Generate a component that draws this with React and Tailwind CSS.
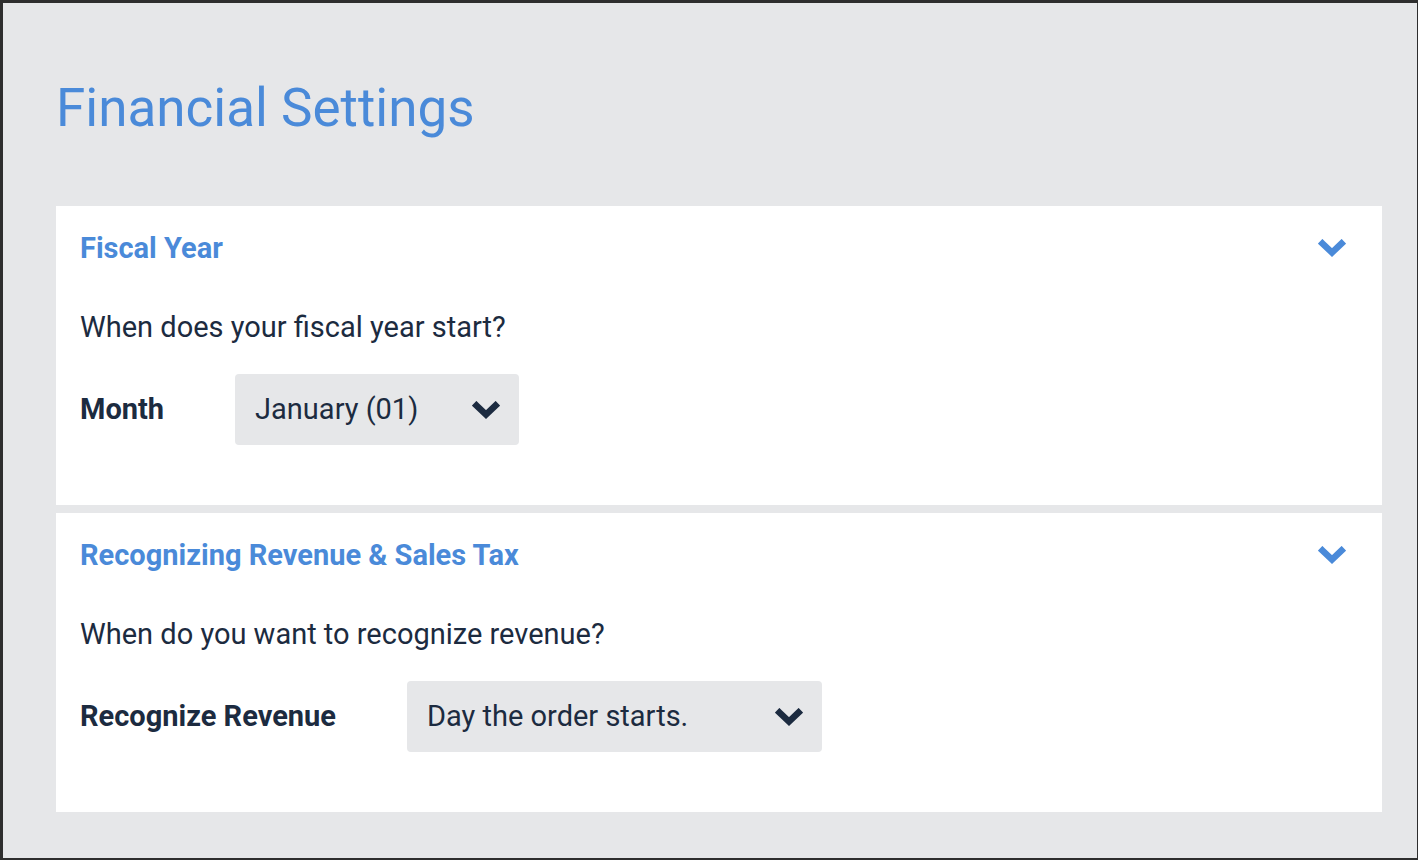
import React from 'react';

function Chevron({ className }) {
  return (
    <svg className={className} width="28" height="18" viewBox="0 0 28 18" fill="none">
      <polyline points="4.5,4.5 14,13.5 23.5,4.5" stroke="currentColor" strokeWidth="6.5" strokeLinecap="square" strokeLinejoin="miter" />
    </svg>
  );
}

function SelectBox({ value, width }) {
  return (
    <div className={`${width} h-[71px] bg-[#e6e7e9] rounded-[4px] flex items-center justify-between pl-[20px] pr-[19px]`}>
      <span className="text-[29px] text-[#1c2b40]">{value}</span>
      <Chevron className="text-[#1c2b40]" />
    </div>
  );
}

function Section({ title, question, label, value, selectWidth }) {
  return (
    <div className="bg-white pt-[24px] pb-[60px] pl-[24px] pr-[36px]">
      <div className="flex items-center justify-between h-[36px]">
        <h2 className="text-[29px] font-bold text-[#4a8ad9] leading-[36px]">{title}</h2>
        <Chevron className="text-[#4a8ad9]" />
      </div>
      <p className="mt-[43px] text-[29px] leading-[36px] text-[#1c2b40]">{question}</p>
      <div className="mt-[29px] flex items-center gap-[71px]">
        <span className="text-[29px] font-bold text-[#1c2b40]">{label}</span>
        <SelectBox value={value} width={selectWidth} />
      </div>
    </div>
  );
}

export default function App() {
  return (
    <div className="w-full h-[860px] bg-[#2e2e2e] pt-[3px] pl-[3px] pr-[1px] pb-[2px]" style={{ fontFamily: 'Roboto, "Noto Sans", sans-serif' }}>
      <div className="h-full bg-[#e6e7e9] pl-[53px] pr-[35px] pt-[74px]">
        <h1 className="text-[53px] leading-[62px] text-[#4a8ad9]">Financial Settings</h1>

        <div className="mt-[67px] flex flex-col gap-[8px]">
          <Section
            title="Fiscal Year"
            question="When does your fiscal year start?"
            label="Month"
            value="January (01)"
            selectWidth="w-[284px]"
          />
          <Section
            title="Recognizing Revenue & Sales Tax"
            question="When do you want to recognize revenue?"
            label="Recognize Revenue"
            value="Day the order starts."
            selectWidth="w-[415px]"
          />
        </div>
      </div>
    </div>
  );
}
